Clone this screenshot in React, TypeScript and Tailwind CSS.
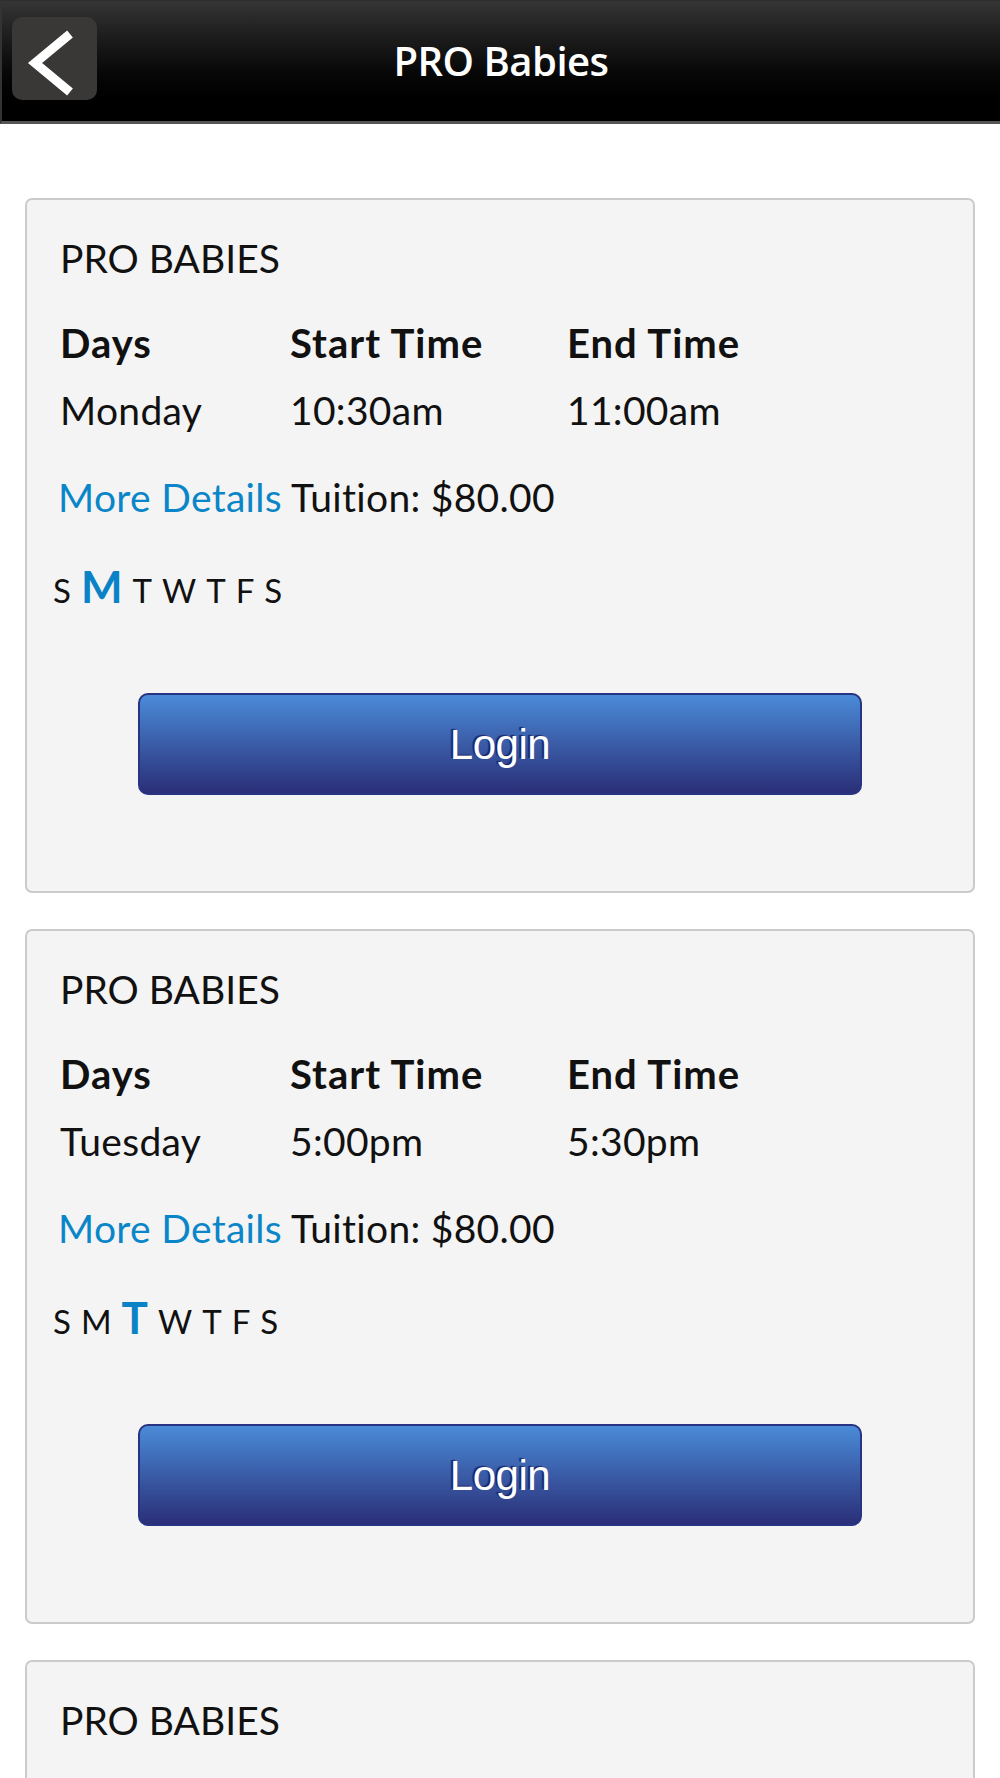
import React from 'react'

interface ClassInfo {
  day: string
  start: string
  end: string
  dayIndex: number
}

const CLASSES: ClassInfo[] = [
  { day: 'Monday', start: '10:30am', end: '11:00am', dayIndex: 1 },
  { day: 'Tuesday', start: '5:00pm', end: '5:30pm', dayIndex: 2 },
  { day: 'Wednesday', start: '5:00pm', end: '5:30pm', dayIndex: 3 },
]

const WEEK = ['S', 'M', 'T', 'W', 'T', 'F', 'S']

function Header() {
  return (
    <div className="relative flex h-[124px] items-center justify-center border-l-2 border-t border-b-[3px] border-l-[#333] border-t-[#2e2e2e] border-b-[#555] bg-gradient-to-b from-[#353535] to-[#000000]">
      {/* Back button */}
      <button className="absolute left-[10px] top-[16px] flex h-[83px] w-[85px] items-center justify-center rounded-[10px] bg-[#3a3836]">
        <svg width="85" height="83" viewBox="0 0 85 83">
          <polyline
            points="58,17 23,46 58,75"
            fill="none"
            stroke="#ffffff"
            strokeWidth="9"
            strokeLinejoin="miter"
          />
        </svg>
      </button>
      <h1 className="font-['Open_Sans',sans-serif] text-[40px] font-semibold tracking-[-0.5px] text-white">
        PRO Babies
      </h1>
    </div>
  )
}

function ClassCard({ info }: { info: ClassInfo }) {
  return (
    <div className="rounded-[7px] border-2 border-[#cbcbcb] bg-[#f4f4f4] pl-[33px] pt-[35px] pb-[96px] font-['Lato',sans-serif] text-[39px] leading-[47px] text-[#111]">
      <p>PRO BABIES</p>

      <div className="mt-[38px] grid grid-cols-[230px_277px_1fr] text-[40px] font-bold tracking-[1px]">
        <span>Days</span>
        <span>Start Time</span>
        <span>End Time</span>
      </div>
      <div className="mt-[20px] grid grid-cols-[230px_277px_1fr] tracking-[0.3px]">
        <span>{info.day}</span>
        <span>{info.start}</span>
        <span>{info.end}</span>
      </div>

      <p className="-ml-[2px] mt-[40px] tracking-[0.3px]">
        <span className="text-[#0a86c8]">More Details</span> Tuition: $80.00
      </p>

      {/* Week days */}
      <div className="-ml-[7px] mt-[43px] flex items-baseline gap-[10px]">
        {WEEK.map((d, i) =>
          i === info.dayIndex ? (
            <span key={i} className="text-[44px] font-bold leading-none text-[#0a83c6]">
              {d}
            </span>
          ) : (
            <span key={i} className="text-[33px] leading-none">
              {d}
            </span>
          )
        )}
      </div>

      <button className="mt-[85px] ml-[78px] flex h-[102px] w-[724px] items-center justify-center rounded-[10px] border-2 border-[#283383] bg-gradient-to-b from-[#4a8bd8] to-[#2a2f78] font-['Liberation_Sans',Arial,sans-serif] text-[42px] tracking-[-0.5px] text-white [text-shadow:-2px_-1px_1px_#1c2566]">
        Login
      </button>
    </div>
  )
}

export default function App() {
  return (
    <div className="h-[1778px] overflow-hidden bg-white">
      <Header />
      <div className="flex flex-col gap-[36px] px-[25px] pt-[74px]">
        {CLASSES.map((c, i) => (
          <ClassCard key={i} info={c} />
        ))}
      </div>
    </div>
  )
}
